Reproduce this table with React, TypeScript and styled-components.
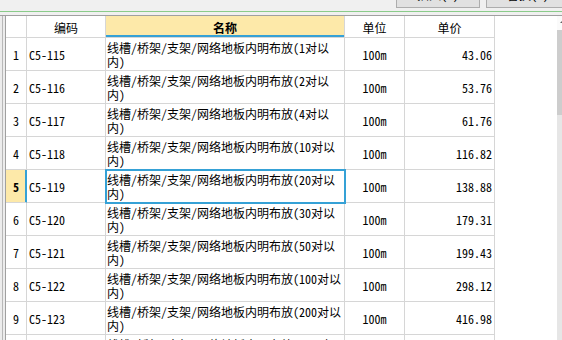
import React from "react";
import styled, { createGlobalStyle, css } from "styled-components";

const Global = createGlobalStyle`
  html, body { margin: 0; padding: 0; background: #f0f0f0; overflow: hidden; }
  * { box-sizing: border-box; }
`;

const FONT = `"Noto Sans Mono CJK SC", "Noto Sans CJK SC", "Liberation Mono", monospace`;
const BLUE = "#35a1d6";
const YELLOW = "#fde9a9";
const GRID = "#d6d6d6";

const Page = styled.div`
  width: 562px;
  height: 340px;
  display: flex;
  flex-direction: column;
  overflow: hidden;
  background: #f0f0f0;
  font-family: ${FONT};
  font-size: 12px;
  color: #000;
`;

const TopBar = styled.div`
  height: 8px;
  display: flex;
  align-items: flex-end;
  gap: 6px;
  padding-left: 396px;
  overflow: hidden;
  flex: none;
`;

const ToolButton = styled.div`
  flex: none;
  width: 84px;
  height: 26px;
  border: 1px solid #adadad;
  background: #e1e1e1;
  display: flex;
  align-items: center;
  justify-content: center;
  font-size: 12px;
  line-height: 14px;
`;

const GreenRule = styled.div`
  flex: none;
  height: 1px;
  margin-top: 3px;
  margin-bottom: 3px;
  background: #8acb8a;
`;

const Main = styled.div`
  flex: 1;
  display: flex;
  min-height: 0;
`;

const LeftStrip = styled.div`
  flex: none;
  width: 5px;
  background: #ececec;
  border-top: 1px solid #a0a0a0;
  padding-left: 2px;
  display: flex;
`;

const StripLine = styled.div`
  width: 1px;
  background: #b8b8b8;
`;

const Grid = styled.div`
  flex: 1;
  background: #fff;
  border-top: 1px solid #a0a0a0;
  border-left: 1px solid #a0a0a0;
  overflow: hidden;
  display: flex;
  flex-direction: column;
`;

const Row = styled.div<{ $header?: boolean }>`
  flex: none;
  display: grid;
  grid-template-columns: 21px 79px 239px 60px 90px 1fr;
  height: ${(p) => (p.$header ? 22 : 33)}px;
`;

type Align = "left" | "center" | "right";

const Cell = styled.div<{
  $align?: Align;
  $bold?: boolean;
  $hilite?: boolean;
  $underline?: boolean;
  $selected?: boolean;
  $rowSel?: boolean;
  $pad?: number;
}>`
  position: relative;
  border-right: 1px solid ${GRID};
  border-bottom: 1px solid ${GRID};
  display: flex;
  align-items: center;
  justify-content: ${(p) =>
    p.$align === "right" ? "flex-end" : p.$align === "center" ? "center" : "flex-start"};
  padding: 0 ${(p) => p.$pad ?? 2}px;
  font-weight: ${(p) => (p.$bold ? 700 : 400)};
  background: ${(p) => (p.$hilite ? YELLOW : "#fff")};
  white-space: nowrap;
  overflow: visible;
  ${(p) =>
    p.$underline &&
    css`
      box-shadow: inset 0 -2px 0 ${BLUE};
    `}
  ${(p) =>
    p.$rowSel &&
    css`
      box-shadow: inset -1px 0 0 ${BLUE};
      border-right-color: ${BLUE};
    `}
  ${(p) =>
    p.$selected &&
    css`
      z-index: 1;
      outline: 2px solid ${BLUE};
      outline-offset: -1px;
    `}
`;

const HeadCell = styled(Cell)`
  padding-top: 2px;
  font-size: 12px;
`;

const Filler = styled.div`
  background: #fff;
`;

const NameText = styled.div`
  line-height: 14px;
  padding-top: 2px;
`;

const Scrollbar = styled.div`
  flex: none;
  width: 5px;
  border-top: 1px solid #a0a0a0;
  display: flex;
  flex-direction: column;
  background: #e6e6e6;
`;

const ScrollArrow = styled.div`
  height: 14px;
  background: #fafafa;
  position: relative;
  &::after {
    content: "";
    position: absolute;
    left: 3px;
    top: 5px;
    border-left: 2px solid transparent;
    border-bottom: 2px solid #606060;
  }
`;

const ScrollThumb = styled.div`
  height: 85px;
  background: #cdcdcd;
`;

type Item = { no: number; code: string; qty: string; price: string };

const items: Item[] = [
  { no: 1, code: "C5-115", qty: "1", price: "43.06" },
  { no: 2, code: "C5-116", qty: "2", price: "53.76" },
  { no: 3, code: "C5-117", qty: "4", price: "61.76" },
  { no: 4, code: "C5-118", qty: "10", price: "116.82" },
  { no: 5, code: "C5-119", qty: "20", price: "138.88" },
  { no: 6, code: "C5-120", qty: "30", price: "179.31" },
  { no: 7, code: "C5-121", qty: "50", price: "199.43" },
  { no: 8, code: "C5-122", qty: "100", price: "298.12" },
  { no: 9, code: "C5-123", qty: "200", price: "416.98" },
  { no: 10, code: "C5-124", qty: "300", price: "" },
];

const SELECTED = 5;

export default function App() {
  return (
    <>
      <Global />
      <Page>
        <TopBar>
          <ToolButton>插入(I)</ToolButton>
          <ToolButton>替换(R)</ToolButton>
        </TopBar>
        <GreenRule />
        <Main>
          <LeftStrip>
            <StripLine />
          </LeftStrip>
          <Grid>
            <Row $header>
              <HeadCell />
              <HeadCell $align="center">编码</HeadCell>
              <HeadCell $align="center" $bold $hilite $underline>
                名称
              </HeadCell>
              <HeadCell $align="center">单位</HeadCell>
              <HeadCell $align="center">单价</HeadCell>
              <Filler />
            </Row>
            {items.map((it) => {
              const sel = it.no === SELECTED;
              return (
                <Row key={it.no}>
                  <Cell $align="center" $bold={sel} $hilite={sel} $rowSel={sel}>
                    {it.no}
                  </Cell>
                  <Cell $pad={2}>{it.code}</Cell>
                  <Cell $pad={1} $selected={sel}>
                    <NameText>
                      线槽/桥架/支架/网络地板内明布放({it.qty}对以
                      <br />
                      内)
                    </NameText>
                  </Cell>
                  <Cell $align="center">100m</Cell>
                  <Cell $align="right" $pad={2}>
                    {it.price}
                  </Cell>
                  <Filler />
                </Row>
              );
            })}
          </Grid>
          <Scrollbar>
            <ScrollArrow />
            <ScrollThumb />
          </Scrollbar>
        </Main>
      </Page>
    </>
  );
}
